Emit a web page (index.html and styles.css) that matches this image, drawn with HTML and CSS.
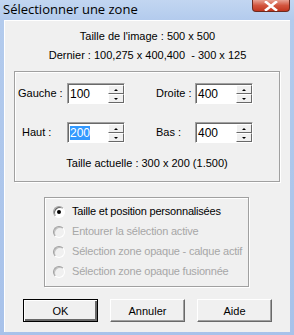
FILE: index.html
```html
<!DOCTYPE html>
<html>
<head>
<meta charset="utf-8">
<link rel="stylesheet" href="styles.css">
</head>
<body>
<div class="window">
  <div class="titlebar">
    <span class="title">Sélectionner une zone</span>
    <span class="close"><svg width="14" height="10" viewBox="0 0 14 10"><path d="M2 1 L12 9 M12 1 L2 9" stroke="#fff" stroke-width="2.6" stroke-linecap="square"/></svg></span>
  </div>
  <div class="client">
    <div class="info">Taille de l'image : 500 x 500</div>
    <div class="info info2">Dernier : 100,275 x 400,400 &nbsp;- 300 x 125</div>
    <div class="group group1">
      <div class="fields">
        <div class="field">
          <span class="lbl">Gauche :</span>
          <span class="spin"><span class="edit">100</span><span class="btns"><span class="b up"></span><span class="b down"></span></span></span>
        </div>
        <div class="field right">
          <span class="lbl">Droite :</span>
          <span class="spin"><span class="edit">400</span><span class="btns"><span class="b up"></span><span class="b down"></span></span></span>
        </div>
        <div class="field">
          <span class="lbl haut">Haut :</span>
          <span class="spin"><span class="edit"><span class="sel">200</span></span><span class="btns"><span class="b up"></span><span class="b down"></span></span></span>
        </div>
        <div class="field right">
          <span class="lbl">Bas :</span>
          <span class="spin"><span class="edit">400</span><span class="btns"><span class="b up"></span><span class="b down"></span></span></span>
        </div>
      </div>
      <div class="actual">Taille actuelle : 300 x 200 (1.500)</div>
    </div>
    <div class="group group2">
      <div class="radio"><span class="dot checked"></span><span>Taille et position personnalisées</span></div>
      <div class="radio disabled"><span class="dot"></span><span>Entourer la sélection active</span></div>
      <div class="radio disabled"><span class="dot"></span><span>Sélection zone opaque - calque actif</span></div>
      <div class="radio disabled"><span class="dot"></span><span>Sélection zone opaque fusionnée</span></div>
    </div>
    <div class="buttons">
      <span class="btn default">OK</span>
      <span class="btn">Annuler</span>
      <span class="btn">Aide</span>
    </div>
  </div>
</div>
</body>
</html>
```
FILE: styles.css
```css
html, body {
  margin: 0;
  padding: 0;
}
body {
  width: 294px;
  height: 335px;
  overflow: hidden;
  font-family: "Liberation Sans", Arial, sans-serif;
  font-size: 11px;
  color: #000;
}
.window {
  width: 294px;
  height: 335px;
  box-sizing: border-box;
  display: flex;
  flex-direction: column;
  background: linear-gradient(to bottom, #c2d6f1 0px, #b3cbed 20px, #a8c2ea 100%);
  padding: 0 4px 3px 4px;
}
.titlebar {
  height: 20px;
  flex: none;
  display: flex;
  justify-content: space-between;
  align-items: flex-start;
  margin: 0 -4px 0 -4px;
  padding-left: 3px;
}
.title {
  font-family: "Open Sans", "Noto Sans", sans-serif;
  font-size: 13px;
  line-height: 19px;
  color: #000;
}
.close {
  width: 38px;
  height: 12px;
  margin-right: 4px;
  background: linear-gradient(to bottom, #e8a293 0%, #d2553e 50%, #c2361f 100%);
  border: 1px solid #6d2a1f;
  border-top: none;
  border-radius: 0 0 4px 4px;
  display: flex;
  justify-content: center;
  align-items: center;
  box-sizing: border-box;
}
.client {
  flex: 1;
  background: #f0f0f0;
  border-top: 1px solid #fff;
  border-left: 1px solid #fff;
  display: flex;
  flex-direction: column;
  align-items: center;
}
.info {
  margin-top: 9px;
  line-height: 13px;
  text-align: center;
}
.info2 {
  margin-top: 6px;
}
.group {
  box-sizing: border-box;
  border: 1px solid #a0a0a0;
  box-shadow: 1px 1px 0 #fff, inset 1px 1px 0 #fff;
}
.group1 {
  margin-top: 9px;
  width: 266px;
  height: 111px;
  align-self: flex-start;
  margin-left: 9px;
  display: flex;
  flex-direction: column;
}
.fields {
  display: grid;
  grid-template-columns: 138px 1fr;
  row-gap: 18px;
  padding: 11px 0 0 3px;
}
.field {
  display: flex;
  align-items: center;
}
.lbl {
  width: 49px;
  line-height: 13px;
}
.field.right .lbl {
  width: 39px;
}
.lbl.haut {
  padding-left: 4px;
  width: 45px;
}
.spin {
  display: flex;
  height: 21px;
  width: 58px;
  box-sizing: border-box;
  border-top: 1px solid #a0a0a0;
  border-left: 1px solid #a0a0a0;
  border-right: 1px solid #fff;
  border-bottom: 1px solid #fff;
}
.edit {
  flex: 1;
  background: #fff;
  border-top: 1px solid #696969;
  border-left: 1px solid #696969;
  padding-left: 1px;
  font-size: 12px;
  line-height: 16px;
  display: flex;
  align-items: center;
}
.sel {
  background: #3399ff;
  color: #fff;
  line-height: 14px;
}
.btns {
  width: 16px;
  display: flex;
  flex-direction: column;
  background: #fff;
  border-top: 1px solid #696969;
}
.b {
  flex: 1;
  background: #f0f0f0;
  border-top: 1px solid #fff;
  border-left: 1px solid #fff;
  border-right: 1px solid #696969;
  border-bottom: 1px solid #696969;
  position: relative;
}
.b::after {
  content: "";
  position: absolute;
  left: 5px;
  width: 0;
  height: 0;
  border-left: 2px solid transparent;
  border-right: 2px solid transparent;
}
.b.up::after {
  top: 3px;
  border-bottom: 2px solid #000;
}
.b.down::after {
  top: 3px;
  border-top: 2px solid #000;
}
.actual {
  margin-top: 14px;
  text-align: center;
  line-height: 13px;
}
.group2 {
  margin-top: 15px;
  width: 205px;
  height: 90px;
  align-self: flex-start;
  margin-left: 39px;
  padding: 7px 0 0 8px;
  display: flex;
  flex-direction: column;
  gap: 7px;
}
.radio {
  display: flex;
  align-items: center;
  gap: 7px;
  line-height: 13px;
  white-space: nowrap;
  letter-spacing: -0.2px;
}
.radio.disabled {
  color: #a7a7a7;
}
.dot {
  width: 12px;
  height: 12px;
  flex: none;
  box-sizing: border-box;
  border-radius: 50%;
  background: #fff;
  border: 1px solid;
  border-color: #a0a0a0 #fff #fff #a0a0a0;
  box-shadow: inset 1px 1px 0 #696969;
  position: relative;
}
.radio.disabled .dot {
  background: #f0f0f0;
  box-shadow: inset 1px 1px 0 #c0c0c0;
}
.dot.checked::after {
  content: "";
  position: absolute;
  left: 3px;
  top: 3px;
  width: 4px;
  height: 4px;
  border-radius: 50%;
  background: #000;
}
.buttons {
  margin-top: 12px;
  display: flex;
  gap: 12px;
}
.btn {
  width: 75px;
  height: 23px;
  box-sizing: border-box;
  display: flex;
  align-items: center;
  justify-content: center;
  background: #f0f0f0;
  border-top: 1px solid #fff;
  border-left: 1px solid #fff;
  border-right: 1px solid #696969;
  border-bottom: 1px solid #696969;
  box-shadow: inset -1px -1px 0 #a0a0a0;
}
.btn.default {
  border: 1px solid #000;
  box-shadow: inset 1px 1px 0 #fff, inset -2px -2px 0 #696969;
}
```
